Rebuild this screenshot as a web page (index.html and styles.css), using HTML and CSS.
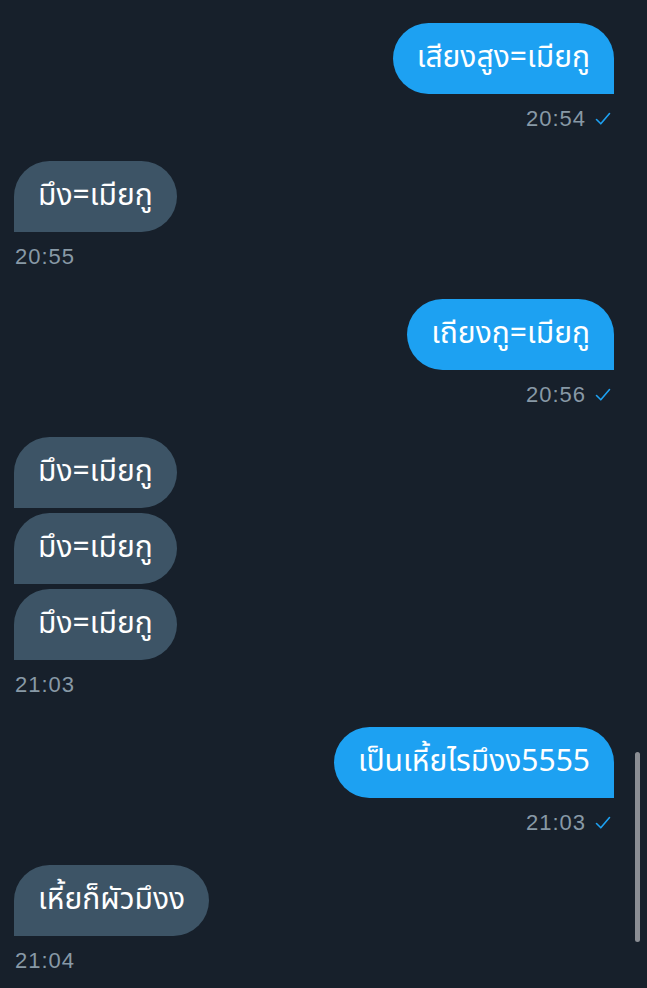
FILE: index.html
```html
<!DOCTYPE html>
<html lang="th">
<head>
<meta charset="utf-8">
<link rel="stylesheet" href="styles.css">
</head>
<body>
<div class="chat">
  <div class="group sent">
    <div class="bubble">เสียงสูง=เมียกู</div>
    <div class="meta"><span>20:54</span><svg class="check" viewBox="0 0 16 14" width="16" height="14"><path d="M1.5 7.5 L5.8 11.8 L14.5 1.5" fill="none" stroke="#1da1f2" stroke-width="1.6" stroke-linecap="round" stroke-linejoin="round"/></svg></div>
  </div>
  <div class="group recv">
    <div class="bubble">มึง=เมียกู</div>
    <div class="meta"><span>20:55</span></div>
  </div>
  <div class="group sent">
    <div class="bubble">เถียงกู=เมียกู</div>
    <div class="meta"><span>20:56</span><svg class="check" viewBox="0 0 16 14" width="16" height="14"><path d="M1.5 7.5 L5.8 11.8 L14.5 1.5" fill="none" stroke="#1da1f2" stroke-width="1.6" stroke-linecap="round" stroke-linejoin="round"/></svg></div>
  </div>
  <div class="group recv">
    <div class="bubble">มึง=เมียกู</div>
    <div class="bubble">มึง=เมียกู</div>
    <div class="bubble">มึง=เมียกู</div>
    <div class="meta"><span>21:03</span></div>
  </div>
  <div class="group sent">
    <div class="bubble">เป็นเหี้ยไรมึงง5555</div>
    <div class="meta"><span>21:03</span><svg class="check" viewBox="0 0 16 14" width="16" height="14"><path d="M1.5 7.5 L5.8 11.8 L14.5 1.5" fill="none" stroke="#1da1f2" stroke-width="1.6" stroke-linecap="round" stroke-linejoin="round"/></svg></div>
  </div>
  <div class="group recv">
    <div class="bubble">เหี้ยก็ผัวมึงง</div>
    <div class="meta"><span>21:04</span></div>
  </div>
</div>
<div class="scrollbar"></div>
</body>
</html>
```
FILE: styles.css
```css
html, body {
  margin: 0;
  padding: 0;
  background: #17202b;
  height: 100%;
  overflow: hidden;
}
body {
  font-family: "Noto Sans Thai", "Noto Sans", "DejaVu Sans", sans-serif;
  position: relative;
}
.chat {
  padding: 23px 33px 0 14px;
  display: flex;
  flex-direction: column;
}
.group {
  display: flex;
  flex-direction: column;
  gap: 5px;
}
.group.sent { align-items: flex-end; }
.group.recv { align-items: flex-start; }
.bubble {
  height: 71px;
  box-sizing: border-box;
  padding: 0 24px 2px;
  display: flex;
  align-items: center;
  font-size: 30px;
  color: #ffffff;
  border-radius: 36px;
  white-space: nowrap;
}
.sent .bubble {
  background: #1da1f2;
  border-bottom-right-radius: 0;
}
.recv .bubble {
  background: #3d5466;
  border-bottom-left-radius: 0;
}
.meta {
  display: flex;
  align-items: center;
  gap: 9px;
  height: 24px;
  margin-top: 8px;
  margin-bottom: 30px;
  font-family: "Liberation Sans", Arial, sans-serif;
  font-size: 22px;
  letter-spacing: 1px;
  color: #8899a6;
}
.sent .meta { margin-right: 3px; }
.recv .meta { margin-left: 1px; }
.check { display: block; }
.scrollbar {
  position: absolute;
  left: 635px;
  top: 752px;
  width: 5px;
  height: 190px;
  border-radius: 3px;
  background: #8b8e94;
}
```
